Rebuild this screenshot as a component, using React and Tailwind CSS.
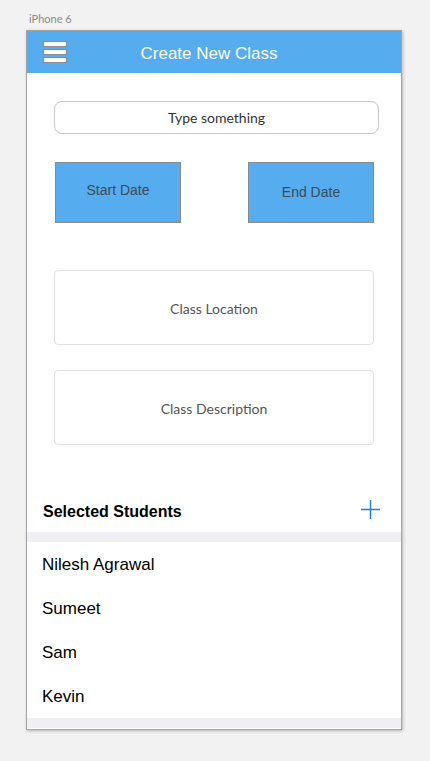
const students = ["Nilesh Agrawal", "Sumeet", "Sam", "Kevin"];

export default function App() {
  return (
    <div className="w-[430px] h-[761px] bg-[#f2f2f2] pt-[12px] pl-[26px] font-['Liberation_Sans',sans-serif]">
      <div className="pl-[3px] h-[18px] text-[11px] leading-[14px] text-[#8a8a8a] font-['Lato',sans-serif]">
        iPhone 6
      </div>

      {/* PHONE FRAME */}
      <div className="w-[376px] h-[700px] bg-white border border-[#a5a5a5] shadow-[1px_1px_3px_rgba(0,0,0,0.25)] flex flex-col">

        {/* HEADER */}
        <div className="h-[42px] bg-[#55acee] flex items-center pl-[16px]">
          <div className="w-[24px] flex flex-col gap-[2px]">
            <div className="h-[6px] bg-white border border-[#8c8c8c]" />
            <div className="h-[6px] bg-white border border-[#8c8c8c]" />
            <div className="h-[6px] bg-white border border-[#8c8c8c]" />
          </div>
          <div className="flex-1 text-center pr-[50px] pt-[3px] text-white text-[17px]">
            Create New Class
          </div>
        </div>

        {/* FORM */}
        <div className="pl-[27px] pt-[28px]">
          <div className="w-[325px] h-[33px] rounded-[8px] border border-[#c8c8c8] flex items-center justify-center text-[14px] text-[#333] font-['Lato',sans-serif]">
            Type something
          </div>

          <div className="mt-[28px] w-[319px] ml-[1px] flex justify-between">
            <div className="w-[126px] h-[61px] bg-[#55acee] border border-[#8a8a8a] flex justify-center pt-[17px] text-[14px] text-[#3d4a58]">
              Start Date
            </div>
            <div className="w-[126px] h-[61px] bg-[#55acee] border border-[#8a8a8a] flex justify-center pt-[19px] text-[14px] text-[#3d4a58]">
              End Date
            </div>
          </div>

          <div className="mt-[47px] w-[320px] h-[75px] rounded-[4px] border border-[#e2e2e2] flex items-center justify-center pt-[1px] text-[14px] text-[#555] font-['Lato',sans-serif]">
            Class Location
          </div>

          <div className="mt-[25px] w-[320px] h-[75px] rounded-[4px] border border-[#e2e2e2] flex items-center justify-center pt-[1px] text-[14px] text-[#555] font-['Lato',sans-serif]">
            Class Description
          </div>
        </div>

        {/* SELECTED STUDENTS */}
        <div className="mt-[55px] h-[32px] flex items-start justify-between pl-[16px] pr-[21px]">
          <span className="text-[16px] font-bold text-black">Selected Students</span>
          <svg width="19" height="19" viewBox="0 0 19 19">
            <path d="M9.5 0 V19 M0 9.5 H19" stroke="#1a7cf0" strokeWidth="1.4" fill="none" />
          </svg>
        </div>
        <div className="h-[10px] bg-[#efeff4]" />

        {students.map((name) => (
          <div key={name} className="h-[44px] flex items-center pl-[15px] pt-[2px] text-[17px] text-black">
            {name}
          </div>
        ))}

        <div className="h-[10px] bg-[#efeff4]" />
      </div>
    </div>
  );
}
